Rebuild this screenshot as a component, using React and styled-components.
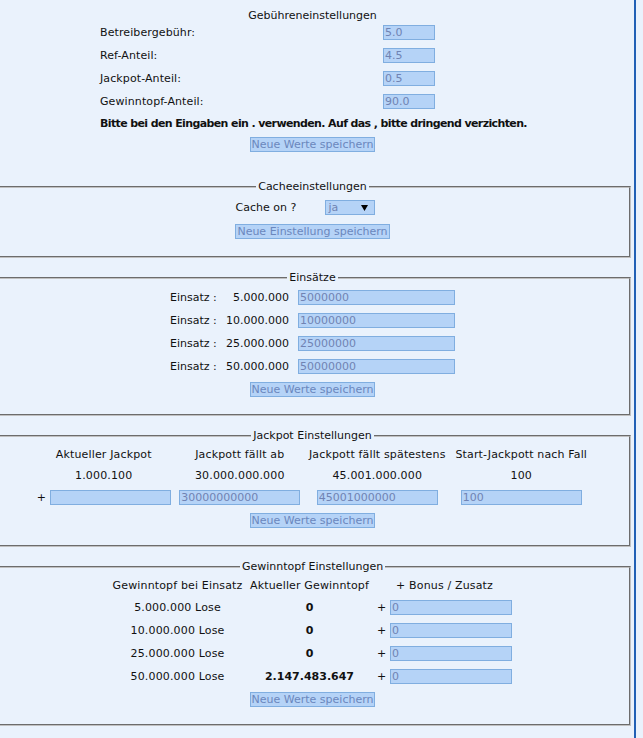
import React from "react";
import styled, { createGlobalStyle } from "styled-components";

const GlobalStyle = createGlobalStyle`
  html, body {
    margin: 0;
    padding: 0;
    background: #eaf2fc;
  }
  body {
    font-family: "DejaVu Sans", Verdana, sans-serif;
    font-size: 11px;
    color: #111;
  }
`;

const fees = [
  { label: "Betreibergebühr:", value: "5.0" },
  { label: "Ref-Anteil:", value: "4.5" },
  { label: "Jackpot-Anteil:", value: "0.5" },
  { label: "Gewinntopf-Anteil:", value: "90.0" },
];

const stakes = [
  { shown: "5.000.000", value: "5000000" },
  { shown: "10.000.000", value: "10000000" },
  { shown: "25.000.000", value: "25000000" },
  { shown: "50.000.000", value: "50000000" },
];

const jackpot = [
  { head: "Aktueller Jackpot", shown: "1.000.100", value: "", plus: true },
  { head: "Jackpott fällt ab", shown: "30.000.000.000", value: "30000000000" },
  { head: "Jackpott fällt spätestens", shown: "45.001.000.000", value: "45001000000" },
  { head: "Start-Jackpott nach Fall", shown: "100", value: "100" },
];

const pots = [
  { lose: "5.000.000 Lose", current: "0" },
  { lose: "10.000.000 Lose", current: "0" },
  { lose: "25.000.000 Lose", current: "0" },
  { lose: "50.000.000 Lose", current: "2.147.483.647" },
];

const App = () => {
  return (
    <>
      <GlobalStyle />
      <Page>
        <TopBlock>
          <Heading>Gebühreneinstellungen</Heading>
          <FeeGrid>
            {fees.map((f) => (
              <React.Fragment key={f.label}>
                <FeeLabel>{f.label}</FeeLabel>
                <div>
                  <Field $w={52} defaultValue={f.value} />
                </div>
              </React.Fragment>
            ))}
            <Notice>
              Bitte bei den Eingaben ein . verwenden. Auf das , bitte dringend verzichten.
            </Notice>
          </FeeGrid>
          <SaveButton $top={7}>Neue Werte speichern</SaveButton>
        </TopBlock>

        <Box>
          <Legend>Cacheeinstellungen</Legend>
          <CacheGrid>
            <CacheLabel>Cache on ?</CacheLabel>
            <FakeSelect>
              <span>ja</span>
              <svg width="7" height="6" viewBox="0 0 7 6">
                <polygon points="0,0 7,0 3.5,6" fill="#000" />
              </svg>
            </FakeSelect>
          </CacheGrid>
          <SaveButton $top={8}>Neue Einstellung speichern</SaveButton>
        </Box>

        <Box>
          <Legend>Einsätze</Legend>
          <StakeGrid>
            {stakes.map((s) => (
              <React.Fragment key={s.value}>
                <span>Einsatz :</span>
                <StakeValue>{s.shown}</StakeValue>
                <Field $w={157} defaultValue={s.value} />
              </React.Fragment>
            ))}
          </StakeGrid>
          <SaveButton $top={8}>Neue Werte speichern</SaveButton>
        </Box>

        <Box>
          <Legend>Jackpot Einstellungen</Legend>
          <JackpotGrid>
            {jackpot.map((j) => (
              <Cell key={j.head}>{j.head}</Cell>
            ))}
            {jackpot.map((j) => (
              <Cell key={j.shown}>{j.shown}</Cell>
            ))}
            {jackpot.map((j) => (
              <InputCell key={"in" + j.head}>
                {j.plus && <Plus>+</Plus>}
                <Field $w={121} defaultValue={j.value} />
              </InputCell>
            ))}
          </JackpotGrid>
          <SaveButton $top={8}>Neue Werte speichern</SaveButton>
        </Box>

        <Box>
          <Legend>Gewinntopf Einstellungen</Legend>
          <PotGrid>
            <Cell>Gewinntopf bei Einsatz</Cell>
            <Cell>Aktueller Gewinntopf</Cell>
            <Cell>+ Bonus / Zusatz</Cell>
            {pots.map((p) => (
              <React.Fragment key={p.lose}>
                <Cell>{p.lose}</Cell>
                <Cell $bold>{p.current}</Cell>
                <InputCell>
                  <Plus>+</Plus>
                  <Field $w={122} defaultValue="0" />
                </InputCell>
              </React.Fragment>
            ))}
          </PotGrid>
          <SaveButton $top={8}>Neue Werte speichern</SaveButton>
        </Box>
      </Page>
    </>
  );
};

const Page = styled.div`
  width: 634px;
  min-height: 100vh;
  border-right: 2px solid #2160b5;
`;

const TopBlock = styled.div`
  margin: 0 3px 0 -6px;
  padding: 9px 0 15px;
`;

const Heading = styled.div`
  text-align: center;
  line-height: 13px;
`;

const FeeGrid = styled.div`
  display: grid;
  grid-template-columns: 283px 1fr;
  width: 425px;
  margin: 3px auto 0;
  row-gap: 8px;
  align-items: center;
`;

const FeeLabel = styled.div`
  line-height: 15px;
  letter-spacing: 0.1px;
`;

const Notice = styled.div`
  grid-column: 1 / -1;
  font-weight: bold;
  line-height: 13px;
  letter-spacing: -0.62px;
  white-space: nowrap;
`;

const Field = styled.input.attrs({ type: "text" })`
  display: block;
  width: ${(p) => p.$w}px;
  height: 15px;
  box-sizing: border-box;
  margin: 0;
  padding: 0 1px;
  border: 1px solid #80aee0;
  background: #b5d3f7;
  color: #7083b3;
  font-family: "DejaVu Sans", Verdana, sans-serif;
  font-size: 11px;
  outline: none;
`;

const SaveButton = styled.button`
  display: block;
  height: 15px;
  box-sizing: border-box;
  margin: ${(p) => p.$top}px auto 0;
  padding: 0 1px;
  border: 1px solid #80aee0;
  background: #b5d3f7;
  color: #6b87bd;
  font-family: "DejaVu Sans", Verdana, sans-serif;
  font-size: 11px;
  line-height: 13px;
  white-space: nowrap;
`;

const Box = styled.fieldset`
  margin: 13px 3px 0 -6px;
  padding: 6px 0 17px;
  border: 2px groove #c0c0c0;
  min-width: 0;
`;

const Legend = styled.legend`
  margin: 0 auto;
  padding: 0 2px;
  line-height: 13px;
  font-size: 11px;
`;

const CacheGrid = styled.div`
  display: grid;
  grid-template-columns: 89px 1fr;
  width: 154px;
  height: 17px;
  margin: 0 auto;
  align-items: center;
`;

const CacheLabel = styled.span`
  line-height: 17px;
`;

const FakeSelect = styled.div`
  display: flex;
  align-items: center;
  justify-content: space-between;
  width: 50px;
  height: 15px;
  box-sizing: border-box;
  padding: 0 6px 0 3px;
  border: 1px solid #80aee0;
  background: #b5d3f7;
  color: #7083b3;
  line-height: 13px;
`;

const StakeGrid = styled.div`
  display: grid;
  grid-template-columns: 47px 63px 157px;
  justify-content: center;
  align-items: center;
  column-gap: 9px;
  row-gap: 8px;
  line-height: 15px;
  white-space: nowrap;
`;

const StakeValue = styled.span`
  text-align: right;
`;

const JackpotGrid = styled.div`
  display: grid;
  grid-template-columns: 134px 121px 137px 134px;
  justify-content: center;
  justify-items: center;
  align-items: center;
  column-gap: 8.5px;
  row-gap: 8px;
`;

const PotGrid = styled(JackpotGrid)`
  grid-template-columns: 129px 119px 135px;
  column-gap: 8px;
`;

const Cell = styled.div`
  line-height: 13px;
  white-space: nowrap;
  letter-spacing: ${(p) => (p.$bold ? "0" : "0.15px")};
  font-weight: ${(p) => (p.$bold ? "bold" : "normal")};
`;

const InputCell = styled.div`
  display: flex;
  align-items: center;
  gap: 4px;
`;

const Plus = styled.span`
  line-height: 15px;
`;

export default App;
